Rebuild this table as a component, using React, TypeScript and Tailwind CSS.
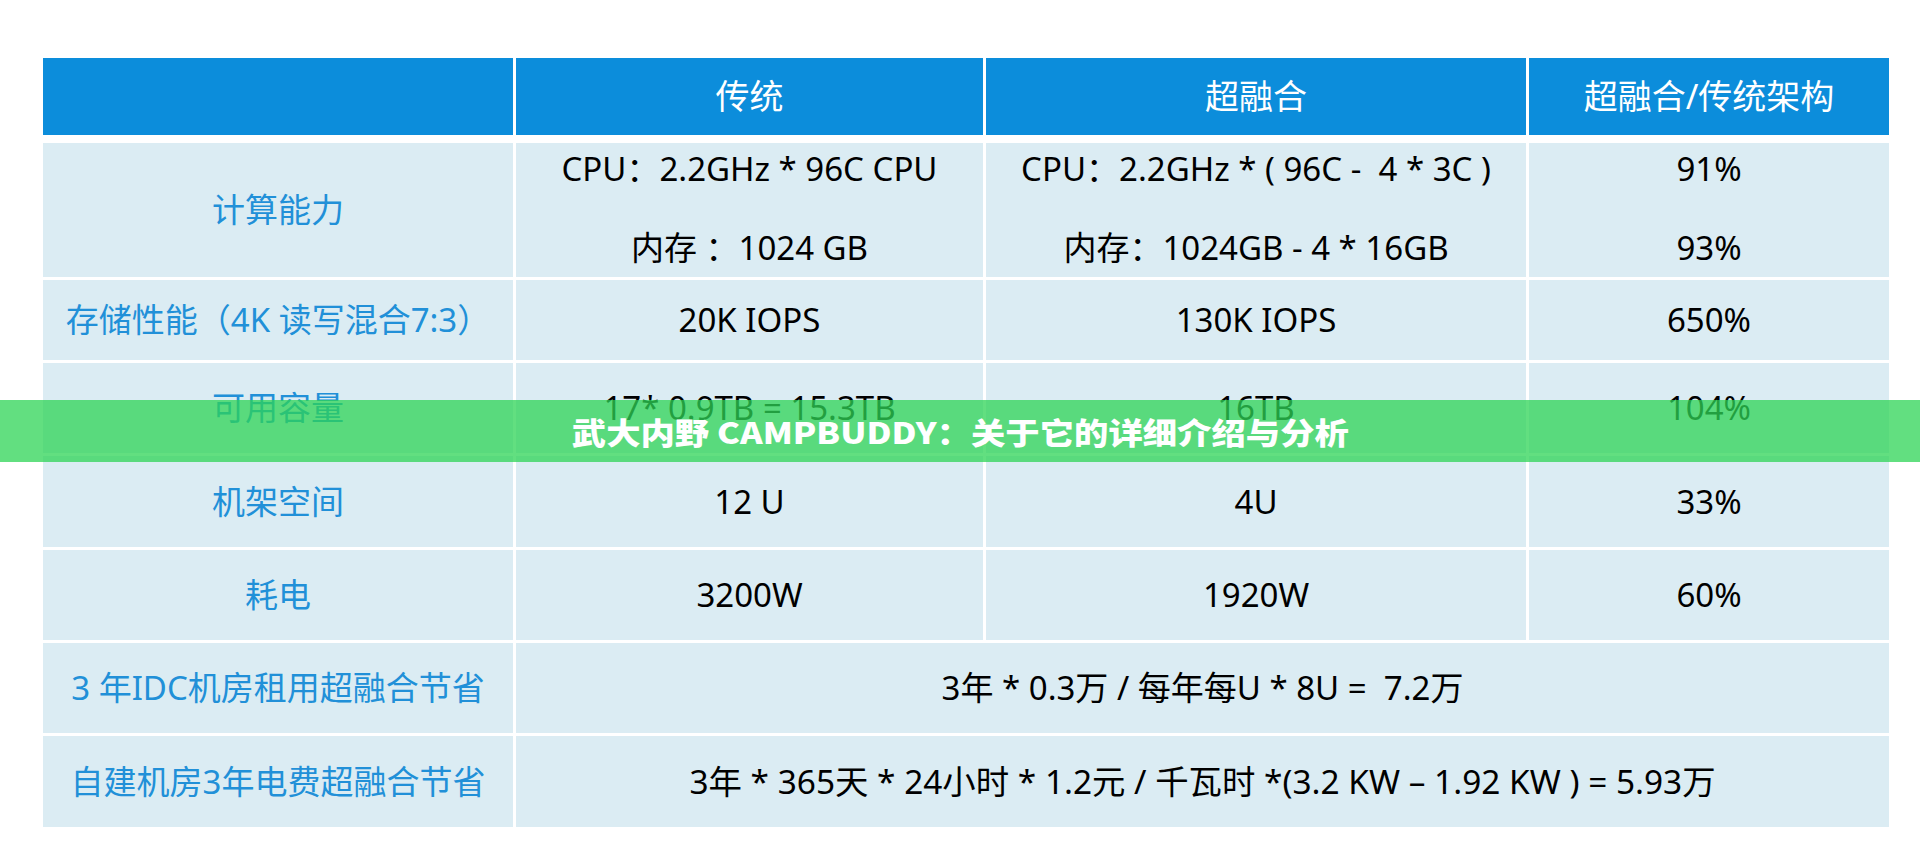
export default function App() {
  const cell =
    "bg-[#dbecf3] flex items-center justify-center text-black text-[33px] whitespace-pre";
  const wide =
    "bg-[#dbecf3] flex items-center justify-center text-black text-[33.4px] whitespace-pre col-span-3";
  const left =
    "bg-[#dbecf3] flex items-center justify-center text-[#2190d8] text-[33px] whitespace-pre";
  const two =
    "bg-[#dbecf3] flex flex-col items-center justify-center gap-[34px] pb-[4px] text-black text-[33px] leading-[45px] whitespace-pre";
  const head =
    "bg-[#0c8ddb] flex items-center justify-center text-white text-[34px] whitespace-pre";
  return (
    <div className="relative w-[1920px] h-[863px] bg-white overflow-hidden font-['Noto_Sans','Noto_Sans_CJK_SC',sans-serif]">
      <div className="pt-[58px] pl-[43px]">
        <div className="grid grid-cols-[470px_467px_540px_360px] gap-x-[3px] h-[77px] mb-[8px]">
          <div className="bg-[#0c8ddb]" />
          <div className={head}>传统</div>
          <div className={head}>超融合</div>
          <div className={head}>超融合/传统架构</div>
        </div>
        <div className="grid grid-cols-[470px_467px_540px_360px] grid-rows-[134px_80px_90px_91px_90px_90px_91px] gap-[3px]">
          <div className={left}>计算能力</div>
          <div className={two}>
            <span>CPU：2.2GHz * 96C CPU</span>
            <span>内存 ：1024 GB</span>
          </div>
          <div className={two}>
            <span>CPU：2.2GHz * ( 96C -  4 * 3C )</span>
            <span>内存：1024GB - 4 * 16GB</span>
          </div>
          <div className={two}>
            <span>91%</span>
            <span>93%</span>
          </div>

          <div className={left}>存储性能（4K 读写混合7:3）</div>
          <div className={cell}>20K IOPS</div>
          <div className={cell}>130K IOPS</div>
          <div className={cell}>650%</div>

          <div className={left}>可用容量</div>
          <div className={cell}>17* 0.9TB = 15.3TB</div>
          <div className={cell}>16TB</div>
          <div className={cell}>104%</div>

          <div className={left}>机架空间</div>
          <div className={cell}>12 U</div>
          <div className={cell}>4U</div>
          <div className={cell}>33%</div>

          <div className={left}>耗电</div>
          <div className={cell}>3200W</div>
          <div className={cell}>1920W</div>
          <div className={cell}>60%</div>

          <div className={left}>3 年IDC机房租用超融合节省</div>
          <div className={`${cell} col-span-3`}>3年 * 0.3万 / 每年每U * 8U =  7.2万</div>

          <div className={left}>自建机房3年电费超融合节省</div>
          <div className={wide}>
            3年 * 365天 * 24小时 * 1.2元 / 千瓦时 *(3.2 KW – 1.92 KW ) = 5.93万
          </div>
        </div>
      </div>

      <div className="absolute left-0 right-0 top-[400px] h-[62px] bg-[#2ed455]/75 flex items-center justify-center">
        <span className="inline-block scale-x-[1.145] text-white font-black text-[30px] leading-none whitespace-pre font-['Noto_Sans_CJK_SC',sans-serif]">
          武大内野 CAMPBUDDY：关于它的详细介绍与分析
        </span>
      </div>
    </div>
  );
}
